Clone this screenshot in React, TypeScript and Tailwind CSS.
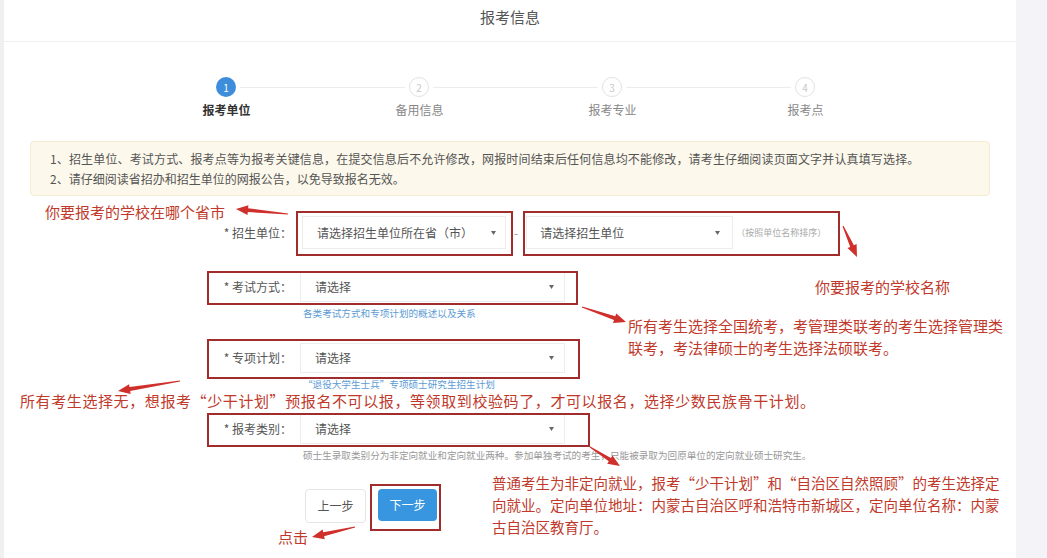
import React from "react";

const RED = "#c0392b";

function arrowPoints(x1: number, y1: number, x2: number, y2: number) {
  const dx = x2 - x1;
  const dy = y2 - y1;
  const len = Math.hypot(dx, dy);
  const ux = dx / len;
  const uy = dy / len;
  const nx = -uy;
  const ny = ux;
  const head = 12;
  const bx = x2 - ux * head;
  const by = y2 - uy * head;
  const p = (x: number, y: number) => `${x.toFixed(1)},${y.toFixed(1)}`;
  return [
    p(x1 + nx * 0.5, y1 + ny * 0.5),
    p(bx + nx * 2, by + ny * 2),
    p(bx + nx * 5, by + ny * 5),
    p(x2, y2),
    p(bx - nx * 5, by - ny * 5),
    p(bx - nx * 2, by - ny * 2),
    p(x1 - nx * 0.5, y1 - ny * 0.5),
  ].join(" ");
}

const arrows: [number, number, number, number][] = [
  [288, 214, 236, 209],
  [843, 226, 857, 257],
  [582, 307, 626, 322],
  [180, 381, 118, 391],
  [590, 447, 620, 466],
  [355, 527, 312, 537],
];

function Caret() {
  return (
    <svg width="5" height="4" viewBox="0 0 5 4" className="shrink-0">
      <polygon points="0,0 5,0 2.5,4" fill="#666" />
    </svg>
  );
}

function Select({ text, className }: { text: string; className: string }) {
  return (
    <div
      className={`flex items-center justify-between border border-[#ececec] bg-white text-[12px] text-[#555] ${className}`}
    >
      <span>{text}</span>
      <Caret />
    </div>
  );
}

function Step({ n, active }: { n: number; active?: boolean }) {
  return active ? (
    <div className="flex h-[20px] w-[20px] shrink-0 items-center justify-center rounded-full bg-[#3d8ddb] text-[10px] text-white">
      {n}
    </div>
  ) : (
    <div className="flex h-[20px] w-[20px] shrink-0 items-center justify-center rounded-full border border-[#e2e2e2] bg-white text-[10px] text-[#c8c8c8]">
      {n}
    </div>
  );
}

function FormRow({
  label,
  hint,
  hintClass,
  className,
}: {
  label: string;
  hint: string;
  hintClass: string;
  className: string;
}) {
  return (
    <div className={className}>
      <div className="flex h-[30px] items-center">
        <div className="w-[292px] pr-[4px] text-right text-[12px] text-[#555]">{label}</div>
        <Select text="请选择" className="ml-[4px] h-[30px] w-[265px] pl-[14px] pr-[10px]" />
      </div>
      <div className={`ml-[299px] mt-[5px] h-[12px] text-[9.6px] leading-[12px] ${hintClass}`}>{hint}</div>
    </div>
  );
}

export default function App() {
  return (
    <div className="relative flex h-[558px] w-[1047px] overflow-hidden bg-[#f4f4f8] font-['Noto_Sans_CJK_SC','Liberation_Sans',sans-serif]">
      <div className="w-[4px] bg-[#f0f0f0]" />
      <main className="w-[1012px] bg-white">
        {/* Header */}
        <div className="h-[42px] border-b border-[#efefef] pt-[7px] text-center text-[15px] leading-[20px] text-[#555]">
          报考信息
        </div>

        {/* Steps */}
        <div className="ml-[212px] mt-[35px] flex w-[599px] items-center">
          <Step n={1} active />
          <div className="mx-[4px] h-px flex-1 bg-[#ececec]" />
          <Step n={2} />
          <div className="mx-[4px] h-px flex-1 bg-[#ececec]" />
          <Step n={3} />
          <div className="mx-[4px] h-px flex-1 bg-[#ececec]" />
          <Step n={4} />
        </div>
        <div className="ml-[126px] mt-[5px] grid w-[772px] grid-cols-4 text-center text-[12px] leading-[16px]">
          <div className="font-semibold text-[#333]">报考单位</div>
          <div className="text-[#888]">备用信息</div>
          <div className="text-[#888]">报考专业</div>
          <div className="text-[#888]">报考点</div>
        </div>

        {/* Notice */}
        <div className="ml-[26px] mt-[23px] h-[55px] w-[960px] rounded-sm border border-[#f3ebd2] bg-[#fcf8eb] pl-[19px] pt-[7px] text-[12px] leading-[20px] text-[#555]">
          <p className="tracking-[0.15px]">1、招生单位、考试方式、报考点等为报考关键信息，在提交信息后不允许修改，网报时间结束后任何信息均不能修改，请考生仔细阅读页面文字并认真填写选择。</p>
          <p>2、请仔细阅读省招办和招生单位的网报公告，以免导致报名无效。</p>
        </div>

        {/* Form */}
        <div className="mt-[20px] flex h-[33px] items-center">
          <div className="w-[292px] pr-[4px] text-right text-[12px] text-[#555]">* 招生单位：</div>
          <Select text="请选择招生单位所在省（市）" className="ml-[6px] h-[33px] w-[204px] pl-[14px] pr-[9px]" />
          <span className="mx-[8px] text-[12px] text-[#999]">-</span>
          <Select text="请选择招生单位" className="h-[33px] w-[207px] pl-[13px] pr-[12px]" />
          <span className="ml-[3px] text-[9px] text-[#aaa]">（按照单位名称排序）</span>
        </div>

        <FormRow
          className="mt-[23px]"
          label="* 考试方式："
          hint="各类考试方式和专项计划的概述以及关系"
          hintClass="text-[#5b9bd5]"
        />
        <FormRow
          className="mt-[24px]"
          label="* 专项计划："
          hint="“退役大学生士兵”专项硕士研究生招生计划"
          hintClass="text-[#5b9bd5]"
        />
        <FormRow
          className="mt-[24px]"
          label="* 报考类别："
          hint="硕士生录取类别分为非定向就业和定向就业两种。参加单独考试的考生，只能被录取为回原单位的定向就业硕士研究生。"
          hintClass="text-[#999]"
        />

        <div className="ml-[301px] mt-[28px] flex gap-[12px]">
          <button className="h-[34px] w-[61px] rounded-sm border border-[#e5e5e5] bg-white text-[12px] text-[#555]">
            上一步
          </button>
          <button className="h-[32px] w-[59px] rounded-sm bg-[#3896e0] text-[12px] text-white">下一步</button>
        </div>
      </main>
      <div className="flex-1" />

      {/* Annotation layer */}
      <div className="pointer-events-none absolute inset-0">
        <div className="absolute left-[296px] top-[211px] h-[45px] w-[217px] border-2 border-[#a02c2c]" />
        <div className="absolute left-[523px] top-[211px] h-[45px] w-[317px] border-2 border-[#a02c2c]" />
        <div className="absolute left-[207px] top-[271px] h-[34px] w-[371px] border-2 border-[#a02c2c]" />
        <div className="absolute left-[207px] top-[339px] h-[40px] w-[373px] border-2 border-[#a02c2c]" />
        <div className="absolute left-[207px] top-[413px] h-[34px] w-[383px] border-2 border-[#a02c2c]" />
        <div className="absolute left-[370px] top-[484px] h-[47px] w-[71px] border-2 border-[#a02c2c]" />

        <svg className="absolute inset-0" width="1047" height="558">
          {arrows.map(([a, b, c, d], i) => (
            <polygon key={i} points={arrowPoints(a, b, c, d)} fill="#d0302b" />
          ))}
        </svg>

        <div className="absolute left-[45px] top-[201px] text-[15px] leading-[22px]" style={{ color: RED }}>
          你要报考的学校在哪个省市
        </div>
        <div className="absolute left-[815px] top-[276px] text-[15px] leading-[22px]" style={{ color: RED }}>
          你要报考的学校名称
        </div>
        <div className="absolute left-[628px] top-[315px] whitespace-nowrap text-[15px] leading-[22px]" style={{ color: RED }}>
          <p>所有考生选择全国统考，考管理类联考的考生选择管理类</p>
          <p>联考，考法律硕士的考生选择法硕联考。</p>
        </div>
        <div className="absolute left-[20px] top-[393px] whitespace-nowrap text-[15px] leading-[16px] tracking-[0.6px]" style={{ color: RED }}>
          所有考生选择无，想报考“少干计划”预报名不可以报，等领取到校验码了，才可以报名，选择少数民族骨干计划。
        </div>
        <div className="absolute left-[492px] top-[472px] whitespace-nowrap text-[14.5px] leading-[22px]" style={{ color: RED }}>
          <p>普通考生为非定向就业，报考“少干计划”和“自治区自然照顾”的考生选择定</p>
          <p>向就业。定向单位地址：内蒙古自治区呼和浩特市新城区，定向单位名称：内蒙</p>
          <p>古自治区教育厅。</p>
        </div>
        <div className="absolute left-[278px] top-[526px] text-[15px] leading-[22px]" style={{ color: RED }}>
          点击
        </div>
      </div>
    </div>
  );
}
